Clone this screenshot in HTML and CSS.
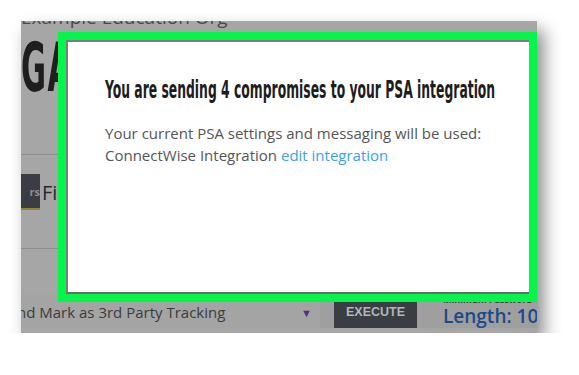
FILE: index.html
```html
<!DOCTYPE html>
<html lang="en">
<head>
    <meta charset="UTF-8">
    <title>PSA integration</title>
    <link rel="stylesheet" href="styles.css">
</head>
<body>
    <div class="shot">
        <div class="page">
            <div class="org">Example Education Org</div>
            <div class="big-title">GA</div>
            <div class="rule"></div>
            <div class="tabs">
                <span class="tab-btn">rs</span>
                <span class="tab-label">Fi</span>
            </div>
            <div class="rule rule-low"></div>
            <div class="actions">
                <div class="select">
                    <span>nd Mark as 3rd Party Tracking</span>
                    <span class="arrow">&#9660;</span>
                </div>
                <button class="execute">EXECUTE</button>
                <div class="policy">
                    <div class="policy-label">Minimum Password</div>
                    <div class="policy-value">Length: 10</div>
                </div>
            </div>
        </div>

        <!-- modal over the dimmed page -->
        <div class="modal">
            <h2 class="modal-title"><span>You are sending 4 compromises to your PSA integration</span></h2>
            <p class="modal-text">
                Your current PSA settings and messaging will be used:<br>
                ConnectWise Integration <a href="#">edit integration</a>
            </p>
        </div>
        <div class="highlight"></div>
    </div>
</body>
</html>
```

FILE: styles.css
```css
* {
    margin: 0;
    padding: 0;
    box-sizing: border-box;
}

body {
    background: #fff;
    font-family: 'Open Sans', sans-serif;
}

.shot {
    position: relative;
    margin: 21px 0 0 21px;
    width: 516px;
    height: 312px;
    background: #a6a6a6;
    overflow: hidden;
    box-shadow: 7px 9px 16px rgba(0, 0, 0, 0.45);
}

/* page behind the modal (already dimmed) */
.page {
    display: flex;
    flex-direction: column;
}

.org {
    margin-top: -16px;
    font-size: 19px;
    line-height: 24px;
    color: #4a4a4a;
    white-space: nowrap;
}

.big-title {
    margin-top: 5px;
    height: 68px;
    font-family: 'DejaVu Sans Condensed', 'DejaVu Sans', sans-serif;
    font-stretch: condensed;
    font-weight: bold;
    font-size: 68px;
    line-height: 68px;
    color: #1e1e1e;
    transform: scaleX(0.5);
    transform-origin: left;
    letter-spacing: 3px;
}

.rule {
    margin-top: 52px;
    height: 1px;
    background: #8e8e8e;
}

.rule-low {
    margin-top: 38px;
}

.tabs {
    display: flex;
    align-items: center;
    margin-top: 19px;
}

.tab-btn {
    display: flex;
    align-items: center;
    justify-content: flex-end;
    width: 19px;
    height: 36px;
    background: #3a3d44;
    border-bottom: 2px solid #8c8a2c;
    color: #8c8e93;
    font-size: 11px;
    font-weight: bold;
    overflow: hidden;
}

.tab-label {
    margin-left: 2px;
    font-size: 20px;
    color: #2a2a2a;
}

.actions {
    display: flex;
    align-items: stretch;
    margin-top: 44px;
    height: 35px;
    background: #9f9f9f;
}

.select {
    flex-shrink: 0;
    display: flex;
    align-items: center;
    justify-content: space-between;
    width: 299px;
    padding-right: 8px;
    padding-top: 3px;
    background: #a4a4a4;
    color: #3c3c3c;
    font-size: 15px;
    white-space: nowrap;
}

.select span:first-child {
    margin-left: -4px;
}

.arrow {
    color: #55307e;
    font-size: 11px;
}

.execute {
    flex-shrink: 0;
    margin-left: 14px;
    width: 83px;
    padding-top: 2px;
    border: none;
    background: #3a3d44;
    color: #b3b5b8;
    font-family: 'Liberation Sans', sans-serif;
    font-weight: bold;
    font-size: 12.5px;
}

.policy {
    margin-left: 26px;
    padding-top: 2px;
    white-space: nowrap;
}

.policy-label {
    font-size: 9px;
    line-height: 10px;
    color: #3a3a3a;
    font-weight: bold;
}

.policy-value {
    font-size: 19px;
    line-height: 22px;
    font-weight: 600;
    color: #1c4a8a;
}

/* modal */
.modal {
    position: absolute;
    left: 45px;
    top: 19px;
    width: 463px;
    height: 254px;
    background: #fff;
    border-top: 2px solid #7d7d7d;
    border-left: 2px solid #7d7d7d;
    border-bottom: 2px solid #6a6a6a;
    padding: 34px 0 0 37px;
}

.modal-title {
    height: 28px;
    font-family: 'DejaVu Sans Condensed', 'DejaVu Sans', sans-serif;
    font-stretch: condensed;
    font-weight: bold;
    font-size: 25px;
    line-height: 28px;
    color: #1d1d1d;
    white-space: nowrap;
}

.modal-title span {
    display: inline-block;
    transform: scaleX(0.55);
    transform-origin: left;
}

.modal-text {
    margin-top: 18px;
    font-size: 15px;
    line-height: 22px;
    color: #555;
}

.modal-text a {
    color: #3ba3e6;
    text-decoration: none;
}

.highlight {
    position: absolute;
    left: 37px;
    top: 11px;
    width: 479px;
    height: 270px;
    border: 8px solid #06f54a;
    pointer-events: none;
}
```
